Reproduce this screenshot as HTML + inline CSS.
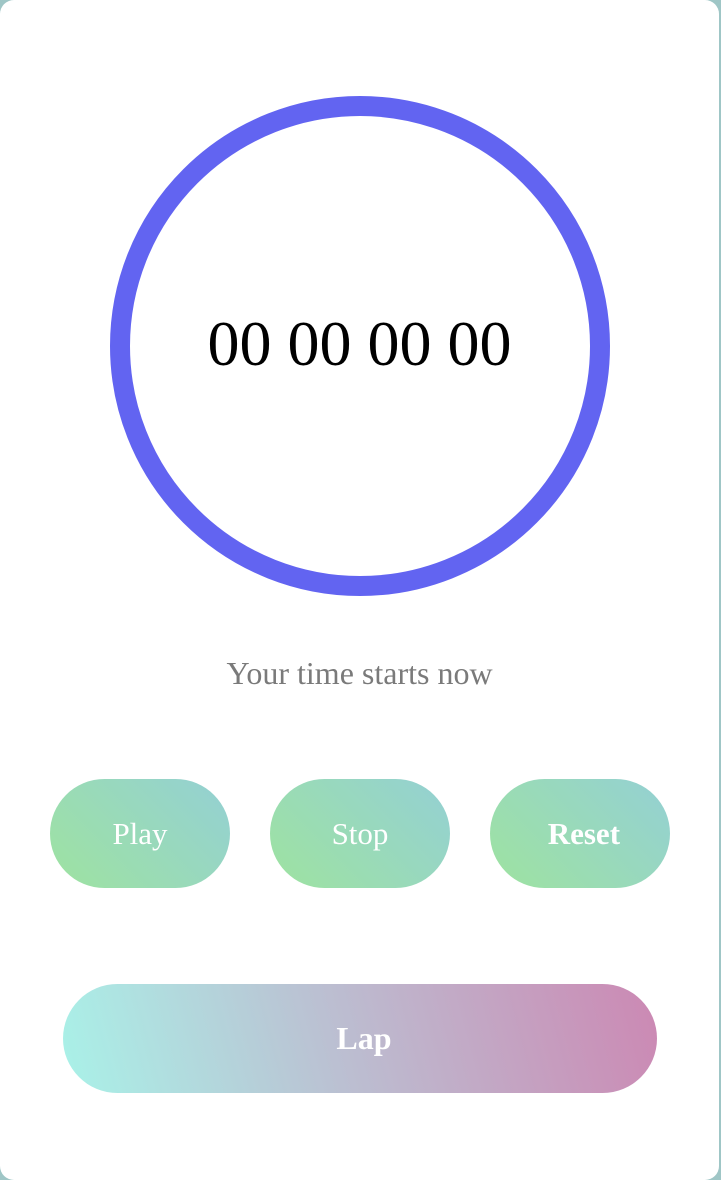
<!DOCTYPE html>
<html><head><style>
html,body{margin:0;padding:0;}
body{width:721px;height:1180px;background:#9fc6c6;position:relative;overflow:hidden;font-family:"Liberation Serif",serif;}
.card{position:absolute;left:0;top:0;width:719px;height:1180px;background:#fff;border-radius:14px;}
.ring{position:absolute;left:110px;top:96px;width:460px;height:460px;border:20px solid #6264f1;border-radius:50%;}
.time{position:absolute;left:0;width:719px;top:306px;text-align:center;font-size:64px;color:#000;line-height:76px;}
.msg{position:absolute;left:0;width:719px;top:655px;text-align:center;font-size:32px;color:#7a7a7a;line-height:36px;}
.btn{position:absolute;top:779px;width:180px;height:109px;border-radius:55px;background:linear-gradient(45deg,#9ee3a0 0%,#94d0d4 100%);color:#fff;font-size:31px;line-height:109px;text-align:center;}
.lap{position:absolute;left:63px;top:984px;width:594px;height:109px;border-radius:55px;background:linear-gradient(75deg,#a9f2e8 0%,#bbc0d2 45%,#cc88b3 100%);color:#fff;font-size:32px;font-weight:bold;line-height:109px;text-align:center;}
</style></head><body>
<div class="card">
<div class="ring"></div>
<div class="time">00 00 00 00</div>
<div class="msg">Your time starts now</div>
<div class="btn" style="left:50px">Play</div>
<div class="btn" style="left:270px">Stop</div>
<div class="btn" style="left:490px;font-weight:bold">&nbsp;Reset</div>
<div class="lap">&nbsp;Lap</div>
</div>
</body></html>
